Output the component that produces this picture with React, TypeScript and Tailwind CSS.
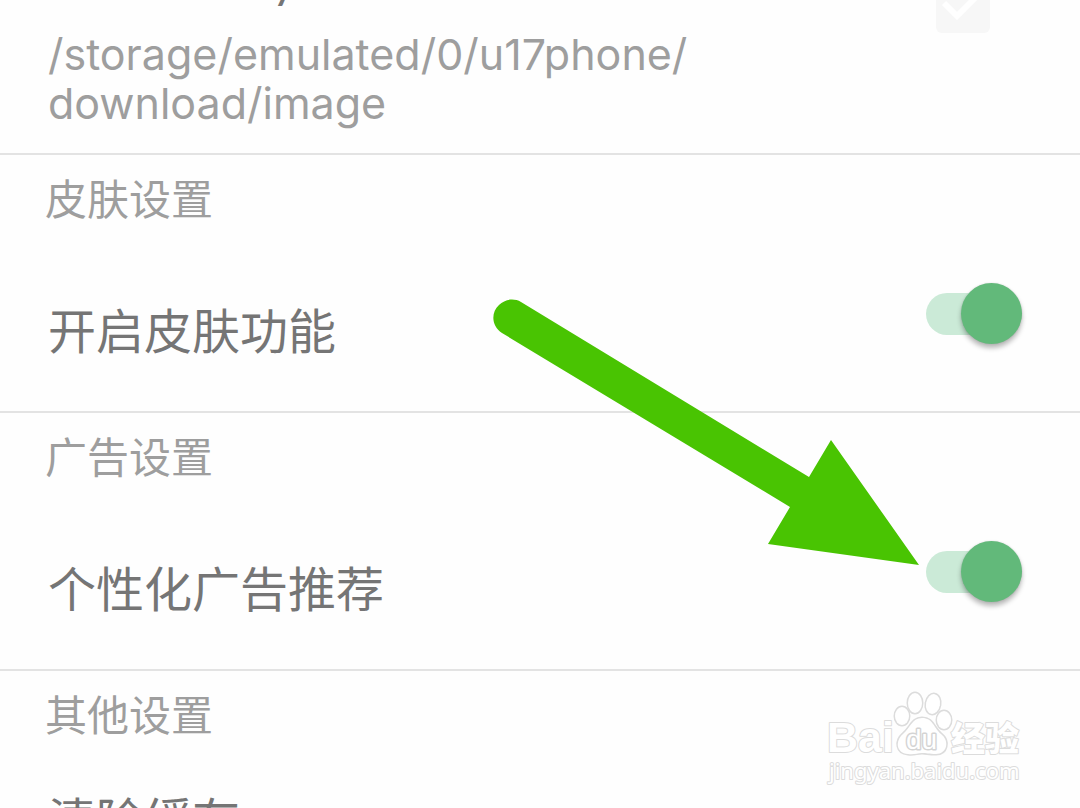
import { useState } from "react";
import type { ReactNode } from "react";

type SwitchProps = {
  id: string;
};

const Switch = ({ id }: SwitchProps) => {
  const [on, setOn] = useState(true);
  return (
    <span className="relative flex h-[61px] w-24 shrink-0 items-center">
      <input
        id={id}
        type="checkbox"
        role="switch"
        checked={on}
        onChange={() => setOn(!on)}
        className="peer h-[42px] w-full appearance-none rounded-full bg-gray-200 checked:bg-[#cbead7]"
      />
      <span className="pointer-events-none absolute left-0 size-[61px] rounded-full bg-white shadow-[0_4px_5px_rgba(0,0,0,0.28),0_0_2px_rgba(0,0,0,0.12)] peer-checked:left-[35px] peer-checked:bg-[#62b97a]" />
    </span>
  );
};

type SectionProps = {
  title: string;
  children: ReactNode;
};

const Section = ({ title, children }: SectionProps) => (
  <section className="border-t-2 border-[#e3e3e3] pt-[18px]">
    <h2 className="px-[45px] text-[42px] leading-12 text-[#9e9e9e]">{title}</h2>
    {children}
  </section>
);

const SwitchRow = ({ id, label }: { id: string; label: string }) => (
  <div className="flex items-start justify-between pt-[62px] pr-[58px] pb-[59px] pl-12">
    <label htmlFor={id} className="mt-[21px] text-5xl text-[#757575]">
      {label}
    </label>
    <Switch id={id} />
  </div>
);

const StorageRow = () => (
  <div className="-mt-11 flex items-center justify-between pr-[90px] pb-[25px] pl-12">
    <label htmlFor="storage" className="max-w-2xl">
      <span className="mb-[26px] block font-[Lato] text-5xl text-[#757575]">
        SD memory
      </span>
      <span className="block font-[Inter] text-[43px] leading-[49px] text-[#9e9e9e]">
        /storage/emulated/0/u17phone/
        <wbr />
        download/image
      </span>
    </label>
    <span className="relative mb-18 size-[54px] shrink-0">
      <input
        id="storage"
        type="checkbox"
        defaultChecked
        disabled
        className="block size-full appearance-none rounded-md bg-[#f7f7f7]"
      />
      <svg
        viewBox="0 0 54 54"
        className="pointer-events-none absolute inset-0"
        fill="none"
        stroke="#fff"
        strokeWidth="6"
      >
        <path d="M8 24 L21 37 L45 13" />
      </svg>
    </span>
  </div>
);

const Arrow = () => (
  <svg
    viewBox="0 0 430 270"
    className="pointer-events-none absolute top-[298px] right-40 h-[270px] w-[430px]"
    fill="#49c402"
  >
    <path d="M31 4 L319 179 L341 142 L429 267 L278 246 L300 209 L12 35 C1 28 1 14 9 7 C15 1 24 0 31 4 Z" />
  </svg>
);

const Watermark = () => (
  <svg
    viewBox="0 0 200 104"
    className="pointer-events-none absolute right-[54px] bottom-4 h-[104px] w-[200px]"
    fill="#fff"
    stroke="#dcdcdc"
    strokeWidth="2"
    strokeLinejoin="round"
    paintOrder="stroke"
  >
    <text x="1" y="64" fontFamily="Liberation Sans" fontWeight="700" fontSize="43">
      Bai
    </text>
    <g strokeWidth="3">
      <ellipse cx="89" cy="15" rx="7" ry="10" />
      <ellipse cx="107" cy="16" rx="7" ry="10" transform="rotate(10 107 16)" />
      <ellipse cx="76" cy="28" rx="7" ry="9" />
      <ellipse cx="118" cy="32" rx="7" ry="9" />
      <path d="M96 30 C107 30 107 39 115 46 C124 53 121 66 110 66 C103 66 100 65 96 65 C91 65 88 67 82 66 C70 65 69 53 77 46 C85 39 86 30 96 30 Z" />
    </g>
    <text x="80" y="61" fontFamily="Liberation Sans" fontSize="28" strokeWidth="3" stroke="#d4d4d4">
      du
    </text>
    <text x="125" y="63" fontFamily="Noto Sans CJK SC" fontWeight="900" fontSize="34">
      经验
    </text>
    <text x="3" y="91" fontFamily="Noto Sans" fontSize="22">
      jingyan.baidu.com
    </text>
  </svg>
);

const App = () => {
  return (
    <main className="relative h-screen w-full overflow-hidden bg-[#fefefe] font-['Noto_Sans_CJK_SC',sans-serif]">
      <StorageRow />
      <Section title="皮肤设置">
        <SwitchRow id="skin" label="开启皮肤功能" />
      </Section>
      <Section title="广告设置">
        <SwitchRow id="ads" label="个性化广告推荐" />
      </Section>
      <Section title="其他设置">
        <button className="block w-full px-12 pt-14 text-left text-5xl text-[#757575]">
          清除缓存
        </button>
      </Section>
      <Arrow />
      <Watermark />
    </main>
  );
};

export default App;
